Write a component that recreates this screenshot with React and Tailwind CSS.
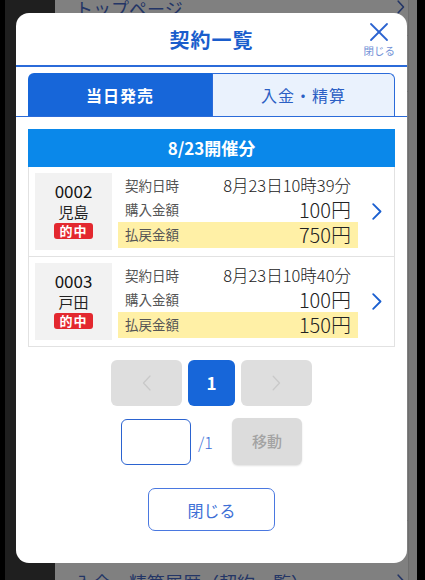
import React from "react";

const FONT = "font-['Noto_Sans_CJK_JP','Noto_Sans',sans-serif]";

function Chevron({ className = "", color = "#1a5fd0", w = 10, h = 17, sw = 1.8 }) {
  return (
    <svg width={w} height={h} viewBox={`0 0 ${w} ${h}`} className={className} fill="none">
      <polyline points={`1.2,1.2 ${w - 1.5},${h / 2} 1.2,${h - 1.2}`} stroke={color} strokeWidth={sw} strokeLinecap="round" strokeLinejoin="round" />
    </svg>
  );
}

function ChevronLeft({ color = "#c9c9c9", w = 9, h = 16, sw = 1.3 }) {
  return (
    <svg width={w} height={h} viewBox={`0 0 ${w} ${h}`} fill="none">
      <polyline points={`${w - 1},1 1.5,${h / 2} ${w - 1},${h - 1}`} stroke={color} strokeWidth={sw} strokeLinecap="round" strokeLinejoin="round" />
    </svg>
  );
}

function Contract({ no, place, date, buy, pay }) {
  return (
    <div className="flex items-stretch p-[6px] border-b border-[#e2e2e2] last:border-b-0">
      <div className="w-[77px] h-[77px] bg-[#f2f2f2] flex flex-col items-center pt-[8px]">
        <div className="text-[17px] leading-[20px] text-[#111]">{no}</div>
        <div className="text-[15px] leading-[20px] text-[#222] mt-[1px]">{place}</div>
        <div className="mt-[1px] bg-[#e3282f] rounded-[3px] px-[5px] text-white font-bold text-[13px] leading-[16px] tracking-[1px]">的中</div>
      </div>
      <div className="ml-[6px] w-[240px] flex flex-col">
        <div className="h-[25px] flex items-center justify-between pl-[7px] pr-[7px]">
          <span className="text-[13.5px] leading-none text-[#555]">契約日時</span>
          <span className="text-[16.5px] leading-none font-light text-[#222]">{date}</span>
        </div>
        <div className="h-[24px] flex items-center justify-between pl-[7px] pr-[7px]">
          <span className="text-[13.5px] leading-none text-[#555]">購入金額</span>
          <span className="text-[20px] leading-none font-light text-[#222]">{buy}</span>
        </div>
        <div className="h-[26px] flex items-center justify-between pl-[7px] pr-[7px] bg-[#fff0a6]">
          <span className="text-[13.5px] leading-none text-[#555]">払戻金額</span>
          <span className="text-[20px] leading-none font-light text-[#222]">{pay}</span>
        </div>
      </div>
      <div className="flex-1 flex items-center justify-center pl-[7px]">
        <Chevron />
      </div>
    </div>
  );
}

export default function App() {
  return (
    <div className={`relative w-[425px] h-[580px] overflow-hidden flex bg-black ${FONT}`}>
      <div className="w-[5px] bg-black" />
      <div className="w-[50px] bg-[#1f1f1f]" />
      <div className="w-[353px] bg-[#808080] flex flex-col">
        <div className="h-[36px] border-b border-[#737373] flex items-start justify-between pl-[20px] pr-[3px]">
          <span className="text-[18px] leading-[20px] mt-[-2px] text-[#233566]">トップページ</span>
          <Chevron color="#233566" w={8} h={14} sw={1.6} />
        </div>
        <div className="h-[56px] border-b border-[#737373]" />
        <div className="flex-1" />
        <div className="h-[60px] border-t border-[#737373] flex items-end justify-between pl-[20px] pr-[3px]">
          <span className="text-[18px] leading-[20px] mb-[-12px] text-[#233566]">入金・精算履歴（契約一覧）</span>
          <div className="mb-[-8px]"><Chevron color="#233566" w={8} h={14} sw={1.6} /></div>
        </div>
      </div>
      <div className="w-[9px] bg-[#787878] border-l border-[#6e6e6e]" />
      <div className="w-[8px] bg-black" />

      <div className="absolute left-[16px] top-[13px] w-[391px] h-[550px] bg-white rounded-[13px] flex flex-col">
        <div className="relative h-[54px] flex items-center justify-center border-b-2 border-[#2b6bd9]">
          <span className="text-[20px] font-bold text-[#1a5dcc] tracking-[1px] mt-[2px]">契約一覧</span>
          <div className="absolute right-[12px] top-[9px] flex flex-col items-center">
            <svg width="20" height="20" viewBox="0 0 20 20" fill="none">
              <line x1="2" y1="2" x2="18" y2="18" stroke="#2b63d0" strokeWidth="1.8" strokeLinecap="round" />
              <line x1="18" y1="2" x2="2" y2="18" stroke="#2b63d0" strokeWidth="1.8" strokeLinecap="round" />
            </svg>
            <span className="text-[10.5px] leading-[12px] text-[#6f8fd6] mt-[3px]">閉じる</span>
          </div>
        </div>

        <div className="px-[12px] pt-[6px] border-b border-[#2b6bd9]">
          <div className="flex h-[43px]">
            <div className="w-[184px] bg-[#1766d9] rounded-tl-[6px] flex items-center justify-center text-white font-bold text-[16px] tracking-[1px]">当日発売</div>
            <div className="flex-1 bg-[#eaf2fd] border border-b-0 border-[#2b6bd9] rounded-tr-[6px] flex items-center justify-center text-[#2b5fc4] text-[16px] tracking-[1px]">入金・精算</div>
          </div>
        </div>

        <div className="px-[12px] pt-[12px]">
          <div className="h-[38px] bg-[#0a88ea] flex items-center justify-center text-white font-bold text-[17px]">8/23開催分</div>
          <div className="border border-t-0 border-[#e2e2e2]">
            <Contract no="0002" place="児島" date="8月23日10時39分" buy="100円" pay="750円" />
            <Contract no="0003" place="戸田" date="8月23日10時40分" buy="100円" pay="150円" />
          </div>
        </div>

        <div className="flex justify-center gap-[6px] mt-[13px]">
          <div className="w-[71px] h-[46px] bg-[#dedede] rounded-[6px] flex items-center justify-center">
            <ChevronLeft />
          </div>
          <div className="w-[47px] h-[46px] bg-[#1766d9] rounded-[6px] flex items-center justify-center text-white font-bold text-[17px]">1</div>
          <div className="w-[71px] h-[46px] bg-[#dedede] rounded-[6px] flex items-center justify-center">
            <Chevron color="#c9c9c9" w={9} h={16} sw={1.3} />
          </div>
        </div>

        <div className="flex justify-center items-center mt-[12px]">
          <div className="w-[70px] h-[46px] border border-[#2b63d0] rounded-[6px] bg-white" />
          <span className="ml-[7px] w-[16px] text-[16px] font-light text-[#3a6fd8]">/1</span>
          <div className="ml-[18px] w-[70px] h-[47px] bg-[#dcdcdc] rounded-[6px] shadow-[0_1px_2px_rgba(0,0,0,0.12)] flex items-center justify-center text-[15px] text-[#a3a3a3] font-medium">移動</div>
        </div>

        <div className="flex justify-center mt-[23px]">
          <div className="w-[127px] h-[43px] border border-[#4a78e0] rounded-[7px] flex items-center justify-center text-[16px] text-[#3d6fd6]">閉じる</div>
        </div>
      </div>
    </div>
  );
}
